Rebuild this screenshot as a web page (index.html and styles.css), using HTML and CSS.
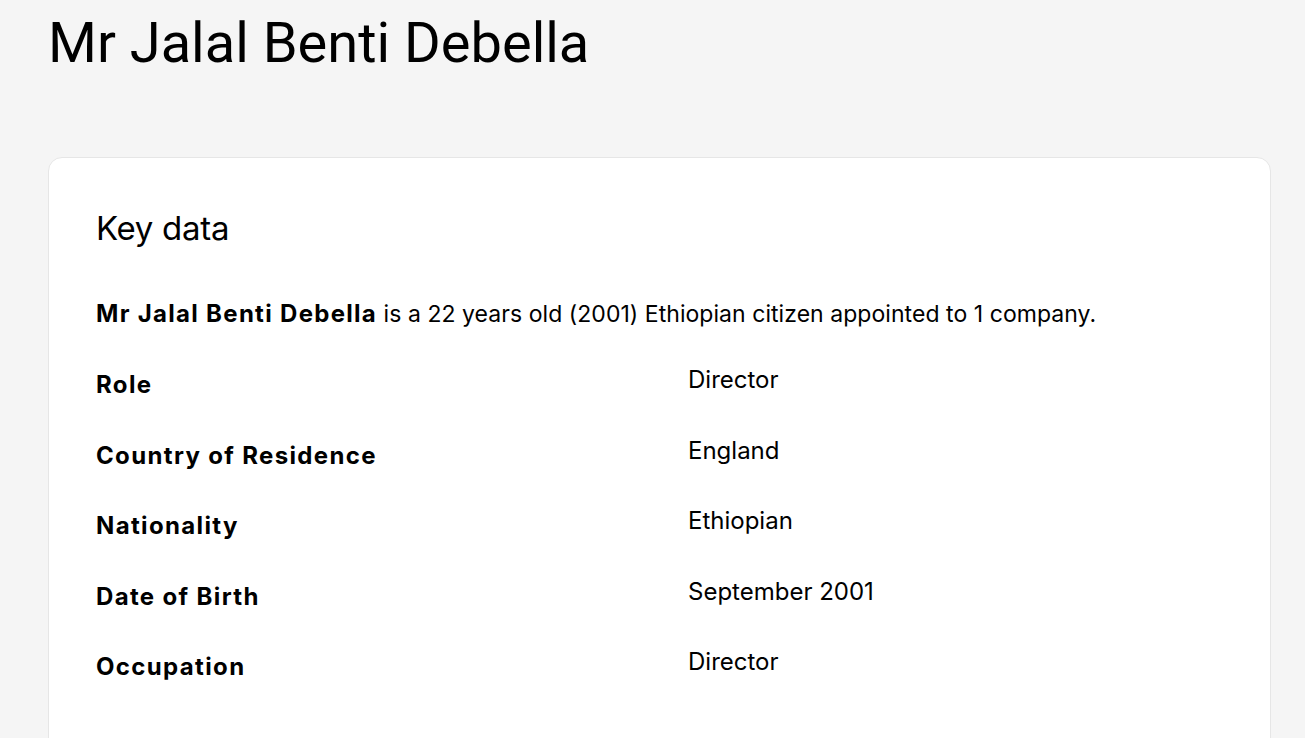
FILE: index.html
```html
<!DOCTYPE html>
<html>
<head>
<meta charset="utf-8">
<link rel="stylesheet" href="styles.css">
</head>
<body>
<main class="page">
  <h1 class="title">Mr Jalal Benti Debella</h1>
  <section class="card">
    <h2 class="card-title">Key data</h2>
    <p class="summary"><strong>Mr Jalal Benti Debella</strong> is a 22 years old (2001) Ethiopian citizen appointed to 1 company.</p>
    <dl class="facts">
      <div class="row"><dt>Role</dt><dd>Director</dd></div>
      <div class="row"><dt>Country of Residence</dt><dd>England</dd></div>
      <div class="row"><dt>Nationality</dt><dd>Ethiopian</dd></div>
      <div class="row"><dt>Date of Birth</dt><dd>September 2001</dd></div>
      <div class="row"><dt>Occupation</dt><dd>Director</dd></div>
    </dl>
  </section>
</main>
</body>
</html>
```
FILE: styles.css
```css
html, body {
  margin: 0;
  padding: 0;
  background: #f5f5f5;
  color: #000;
  font-family: Inter, "Noto Sans", sans-serif;
}
.page {
  padding: 0 34px 0 48px;
}
.title {
  margin: 0;
  padding-top: 8px;
  font-family: Roboto, Inter, sans-serif;
  font-size: 56px;
  font-weight: 400;
  line-height: 70px;
}
.card {
  margin-top: 79px;
  background: #fff;
  border: 1px solid #e6e6e6;
  border-radius: 14px;
  padding: 48px 47px 60px;
}
.card-title {
  margin: 0;
  font-size: 33px;
  font-weight: 400;
  line-height: 44px;
  letter-spacing: -0.3px;
}
.summary {
  margin: 47px 0 0;
  font-size: 23px;
  line-height: 34px;
  letter-spacing: 0.05px;
}
.summary strong {
  font-size: 24px;
  font-weight: 700;
  letter-spacing: 1.3px;
}
.facts {
  margin: 32px 0 0;
}
.row {
  display: grid;
  grid-template-columns: 592px 1fr;
  height: 70.5px;
}
dt {
  font-size: 24px;
  font-weight: 700;
  letter-spacing: 1.35px;
  line-height: 34px;
  padding-top: 5px;
}
dd {
  margin: 0;
  font-size: 24px;
  line-height: 34px;
}
```
